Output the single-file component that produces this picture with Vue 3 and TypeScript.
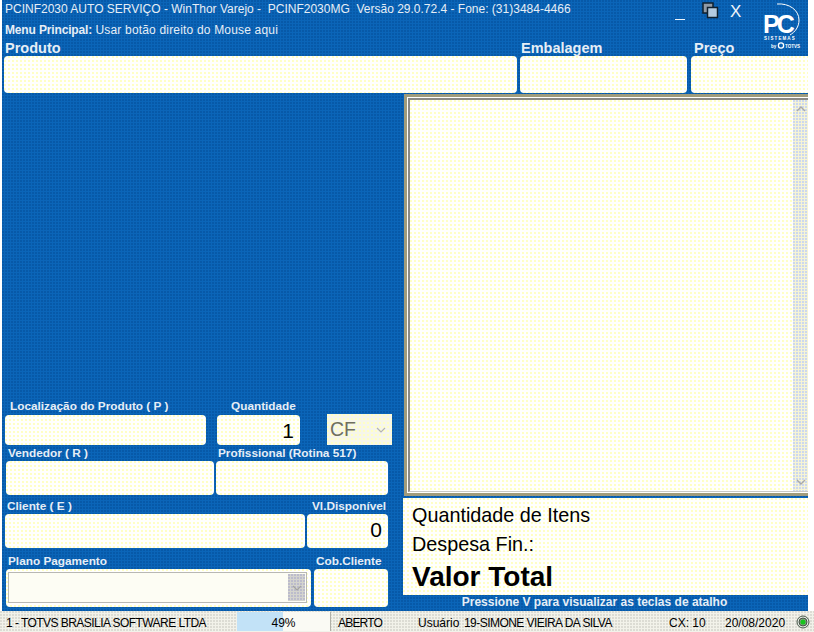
<script setup lang="ts">
const progress = 49

// os espacos duplos fazem parte do titulo original
const title = 'PCINF2030 AUTO SERVIÇO - WinThor Varejo -  PCINF2030MG  Versão 29.0.72.4 - Fone: (31)3484-4466'

const statusCells = [
  { text: 'ABERTO', cls: 'st-aberto' },
  { text: 'Usuário', cls: 'st-usuario' },
  { text: '19-SIMONE VIEIRA DA SILVA', cls: 'st-nome' },
  { text: 'CX: 10', cls: 'st-cx' },
  { text: '20/08/2020', cls: 'st-data' }
]
</script>

<template>
  <div class="screen">
    <div class="main">
      <header class="header">
        <div class="header-text">
          <div class="title">{{ title }}</div>
          <div class="menu"><b>Menu Principal:</b> <span class="menu-hint">Usar botão direito do Mouse aqui</span></div>
        </div>
        <div class="win-buttons">
          <span class="win-min"></span>
          <svg class="win-restore" width="17" height="17" viewBox="0 0 17 17">
            <rect x="1" y="1" width="10" height="10" fill="#8f9aa6" stroke="#10202e" stroke-width="1.5" />
            <rect x="5.5" y="5.5" width="10" height="10" fill="#b4cbe0" stroke="#10202e" stroke-width="1.5" />
          </svg>
          <span class="win-close">X</span>
          <svg class="logo" width="40" height="46" viewBox="0 0 40 46">
            <path d="M16 1 C28 0 38 7 38 17 C38 24 34 29 29 32" fill="none" stroke="#fff" stroke-width="1" />
            <text x="2" y="30" class="logo-pc">PC</text>
            <text x="3" y="36.5" class="logo-sis">SISTEMAS</text>
            <text x="10" y="44.5" class="logo-by">by</text>
            <circle cx="20" cy="42.5" r="2.6" fill="none" stroke="#fff" stroke-width="1.3" />
            <text x="24" y="44.5" class="logo-by">TOTVS</text>
          </svg>
        </div>
      </header>

      <div class="product-row">
        <div class="field f-produto">
          <label class="big-label">Produto</label>
          <div class="input product-input"></div>
        </div>
        <div class="field f-embalagem">
          <label class="big-label">Embalagem</label>
          <div class="input product-input"></div>
        </div>
        <div class="field f-preco">
          <label class="big-label">Preço</label>
          <div class="input product-input flat-right"></div>
        </div>
      </div>

      <div class="body">
        <section class="left">
          <div class="form-row r1">
            <div class="field f-local">
              <label>Localização do Produto ( P )</label>
              <div class="input"></div>
            </div>
            <div class="field f-qtd">
              <label>Quantidade</label>
              <div class="input value">1</div>
            </div>
            <div class="input select-cf">
              <span>CF</span>
              <svg width="10" height="6" viewBox="0 0 10 6"><path d="M1 1l4 4 4-4" fill="none" stroke="#b4b4b4" stroke-width="1.2" /></svg>
            </div>
          </div>
          <div class="form-row r2">
            <div class="field f-vendedor">
              <label>Vendedor ( R )</label>
              <div class="input"></div>
            </div>
            <div class="field f-prof">
              <label>Profissional (Rotina 517)</label>
              <div class="input"></div>
            </div>
          </div>
          <div class="form-row r3">
            <div class="field f-cliente">
              <label>Cliente ( E )</label>
              <div class="input"></div>
            </div>
            <div class="field f-disp">
              <label>Vl.Disponível</label>
              <div class="input value">0</div>
            </div>
          </div>
          <div class="form-row r4">
            <div class="field f-plano">
              <label>Plano Pagamento</label>
              <div class="input plano-wrap">
                <div class="plano-select">
                  <span class="plano-btn">
                    <svg width="10" height="6" viewBox="0 0 10 6"><path d="M1 1l4 4 4-4" fill="none" stroke="#a4a4a0" stroke-width="1.2" /></svg>
                  </span>
                </div>
              </div>
            </div>
            <div class="field f-cob">
              <label>Cob.Cliente</label>
              <div class="input"></div>
            </div>
          </div>
        </section>

        <section class="right">
          <div class="list-box">
            <div class="list-inner">
              <div class="list-area"></div>
              <div class="scrollbar">
                <svg width="10" height="6" viewBox="0 0 10 6"><path d="M1 5l4-4 4 4" fill="none" stroke="#a9a9a9" stroke-width="1.4" /></svg>
                <svg width="10" height="6" viewBox="0 0 10 6"><path d="M1 1l4 4 4-4" fill="none" stroke="#a9a9a9" stroke-width="1.4" /></svg>
              </div>
            </div>
          </div>
          <div class="totals">
            <div class="total-line">Quantidade de Itens</div>
            <div class="total-line">Despesa Fin.:</div>
            <div class="total-main">Valor Total</div>
          </div>
          <div class="hint">Pressione V para visualizar as teclas de atalho</div>
        </section>
      </div>
    </div>

    <footer class="status">
      <span class="st-empresa">1 - TOTVS BRASILIA SOFTWARE LTDA</span>
      <div class="gauge">
        <div class="gauge-fill" :style="{ width: progress + '%' }"></div>
        <span class="gauge-text">{{ progress }}%</span>
      </div>
      <span v-for="cell in statusCells" :key="cell.text" :class="cell.cls">{{ cell.text }}</span>
      <svg class="led" width="14" height="16" viewBox="0 0 14 16">
        <circle cx="7" cy="8" r="6" fill="#dfe6df" stroke="#4b5a4b" />
        <circle cx="7" cy="8" r="4" fill="#8fa08f" stroke="#2d3a2d" stroke-width="0.8" />
        <circle cx="7" cy="8" r="2.6" fill="#17c41c" />
      </svg>
    </footer>
  </div>
</template>

<style scoped>
.screen {
  width: 814px;
  height: 632px;
  overflow: hidden;
  display: flex;
  flex-direction: column;
  background-color: #fff;
  font-family: "Liberation Sans", Arial, sans-serif;
}

.main {
  width: 806px;
  height: 611px;
  margin-left: 2px;
  display: flex;
  flex-direction: column;
  color: #e6eef6;
  background-color: #0b65b8;
  background-image: radial-gradient(circle at 1px 1px, #0759a8 0.8px, transparent 1px);
  background-size: 3px 3px;
}

.header {
  height: 39px;
  display: flex;
  justify-content: space-between;
  flex: none;
}

.title {
  margin: 2px 0 0 3px;
  height: 15px;
  line-height: 15px;
  font-size: 12px;
  white-space: pre;
}

.menu {
  margin: 6px 0 0 3px;
  height: 15px;
  line-height: 15px;
  font-size: 12px;
  white-space: pre;
}

.menu b {
  letter-spacing: -0.15px;
}

.menu-hint {
  letter-spacing: 0.18px;
}

.win-buttons {
  position: relative;
  width: 140px;
}

.win-min {
  position: absolute;
  left: 7px;
  top: 19px;
  width: 10px;
  height: 1px;
  background: #eef4fa;
}

.win-restore {
  position: absolute;
  left: 34px;
  top: 2px;
}

.win-close {
  position: absolute;
  left: 62px;
  top: 3px;
  font-size: 17px;
  line-height: 18px;
  color: #eef4fa;
}

.logo {
  position: absolute;
  left: 93px;
  top: 3px;
}

.logo-pc {
  font: bold 25px "Liberation Sans", sans-serif;
  letter-spacing: -3px;
  fill: #fff;
}

.logo-sis {
  font: bold 4.5px "Liberation Sans", sans-serif;
  letter-spacing: 1.1px;
  fill: #fff;
}

.logo-by {
  font: bold 4.5px "Liberation Sans", sans-serif;
  fill: #fff;
}

.product-row {
  display: flex;
  flex: none;
  padding-left: 2px;
}

.field {
  display: flex;
  flex-direction: column;
}

.big-label {
  height: 17px;
  line-height: 18px;
  font-size: 14.5px;
  font-weight: bold;
  padding-left: 1px;
}

.input {
  background-color: #fffffd;
  background-image: radial-gradient(circle at 1px 1px, #ffffc4 0.7px, transparent 1px);
  background-size: 4px 4px;
  border-radius: 4px;
  box-sizing: border-box;
  color: #000;
}

.product-input {
  height: 37px;
}

.flat-right {
  border-radius: 4px 0 0 4px;
}

.f-produto {
  width: 513px;
}

.f-embalagem {
  width: 167px;
  margin-left: 3px;
}

.f-preco {
  width: 117px;
  margin-left: 4px;
}

.f-preco .big-label {
  padding-left: 3px;
}

.body {
  flex: 1;
  display: flex;
  min-height: 0;
}

.left {
  width: 401px;
  flex: none;
  display: flex;
  flex-direction: column;
  justify-content: flex-end;
  padding-bottom: 4px;
  box-sizing: border-box;
}

.form-row {
  display: flex;
}

.form-row label {
  font-size: 11.8px;
  font-weight: bold;
  line-height: 14px;
  box-sizing: border-box;
  white-space: nowrap;
}

.r1 label { height: 17px; padding-top: 1px; }
.r2 label { height: 16px; padding-top: 1px; }
.r3 label { height: 19px; padding-top: 4px; }
.r4 label { height: 21px; padding-top: 6px; }

.r1 .input { height: 30px; }
.r2 .input { height: 34px; }
.r3 .input { height: 34px; }
.r4 .input { height: 38px; }

.f-local {
  width: 201px;
  margin-left: 3px;
}

.f-local label {
  padding-left: 5px;
}

.f-qtd {
  width: 83px;
  margin-left: 11px;
}

.f-qtd label {
  padding-left: 14px;
}

.value {
  font-size: 21px;
  line-height: 32px;
  text-align: right;
  padding-right: 6px;
}

.r1 .select-cf {
  width: 65px;
  height: 31px;
  margin-left: 27px;
  align-self: flex-end;
  border-radius: 0;
  display: flex;
  align-items: center;
  justify-content: space-between;
  padding: 0 6px 0 3px;
  font-size: 19.5px;
  color: #6e6e60;
  background-color: #f6f6ea;
}

.f-vendedor {
  width: 208px;
  margin-left: 4px;
}

.f-vendedor label,
.f-cliente label,
.f-plano label {
  padding-left: 2px;
}

.f-prof {
  width: 172px;
  margin-left: 2px;
}

.f-prof label {
  padding-left: 2px;
}

.f-cliente {
  width: 300px;
  margin-left: 3px;
}

.f-disp {
  width: 81px;
  margin-left: 2px;
}

.f-disp label {
  padding-left: 5px;
}

.f-plano {
  width: 305px;
  margin-left: 4px;
}

.plano-wrap {
  padding: 3px 4px 4px 2px;
}

.plano-select {
  height: 31px;
  box-sizing: border-box;
  border: 1px solid #b8b8b4;
  background: #fdfdf4;
  display: flex;
  justify-content: flex-end;
  padding: 1px;
}

.plano-btn {
  width: 17px;
  background-color: #d4d4ce;
  background-image: radial-gradient(circle at 1px 1px, #bcbccc 0.8px, transparent 1px);
  background-size: 3px 3px;
  display: flex;
  align-items: center;
  justify-content: center;
}

.f-cob {
  width: 74px;
  margin-left: 3px;
}

.f-cob label {
  padding-left: 2px;
}

.right {
  width: 405px;
  flex: none;
  display: flex;
  flex-direction: column;
  padding-top: 1px;
  box-sizing: border-box;
}

.list-box {
  height: 402px;
  box-sizing: border-box;
  margin-left: 1px;
  border: 3px solid #a09c7c;
  border-right: 0;
  background: #fffffd;
  padding: 1px 0 1px 1px;
  display: flex;
}

.list-inner {
  flex: 1;
  display: flex;
  border-top: 2px solid #8a8a86;
  border-left: 2px solid #8a8a86;
  border-bottom: 1px solid #c8c8c4;
}

.list-area {
  flex: 1;
  background-color: #fffffd;
  background-image: radial-gradient(circle at 1px 1px, #ffffc4 0.7px, transparent 1px);
  background-size: 4px 4px;
}

.scrollbar {
  width: 15px;
  display: flex;
  flex-direction: column;
  justify-content: space-between;
  align-items: center;
  padding: 6px 0;
  box-sizing: border-box;
  background-color: #f6f4d4;
  background-image: radial-gradient(circle at 1px 1px, #ccd8ee 0.8px, transparent 1px);
  background-size: 3px 3px;
}

.totals {
  height: 97px;
  margin-top: 2px;
  padding: 3px 0 0 9px;
  box-sizing: border-box;
  color: #000;
  background-color: #fffffd;
  background-image: radial-gradient(circle at 1px 1px, #ffffc4 0.7px, transparent 1px);
  background-size: 4px 4px;
}

.total-line {
  font-size: 19.8px;
  height: 29px;
  line-height: 29px;
}

.total-main {
  font-size: 28px;
  font-weight: bold;
  height: 36px;
  line-height: 36px;
}

.hint {
  height: 16px;
  line-height: 15px;
  font-size: 12px;
  font-weight: bold;
  text-align: center;
  padding-right: 22px;
}

.status {
  height: 21px;
  flex: none;
  position: relative;
  background-color: #f2f2ea;
  background-image: radial-gradient(circle at 1px 1px, #dcdcd4 0.8px, transparent 1px);
  background-size: 3px 3px;
  font-size: 12px;
  line-height: 25px;
  color: #000;
  white-space: nowrap;
  display: flex;
}

.st-empresa { margin-left: 6px; width: 231px; letter-spacing: -0.55px; }

.gauge {
  width: 94px;
  height: 19px;
  margin-top: 1px;
  position: relative;
  background: #fafaf4;
  border-right: 1px solid #b0b0a8;
  box-sizing: border-box;
  text-align: center;
  line-height: 23px;
}

.gauge-fill {
  position: absolute;
  left: 0;
  top: 0;
  bottom: 0;
  background: #c2e2f7;
}

.gauge-text {
  position: relative;
}

.st-aberto { margin-left: 7px; width: 80px; letter-spacing: -0.8px; }
.st-usuario { width: 46px; }
.st-nome { width: 205px; letter-spacing: -0.55px; }
.st-cx { width: 56px; }
.st-data { width: 71px; }

.led {
  margin-top: 3px;
}
</style>

<style>
html,
body {
  margin: 0;
  background: #fff;
}
</style>
